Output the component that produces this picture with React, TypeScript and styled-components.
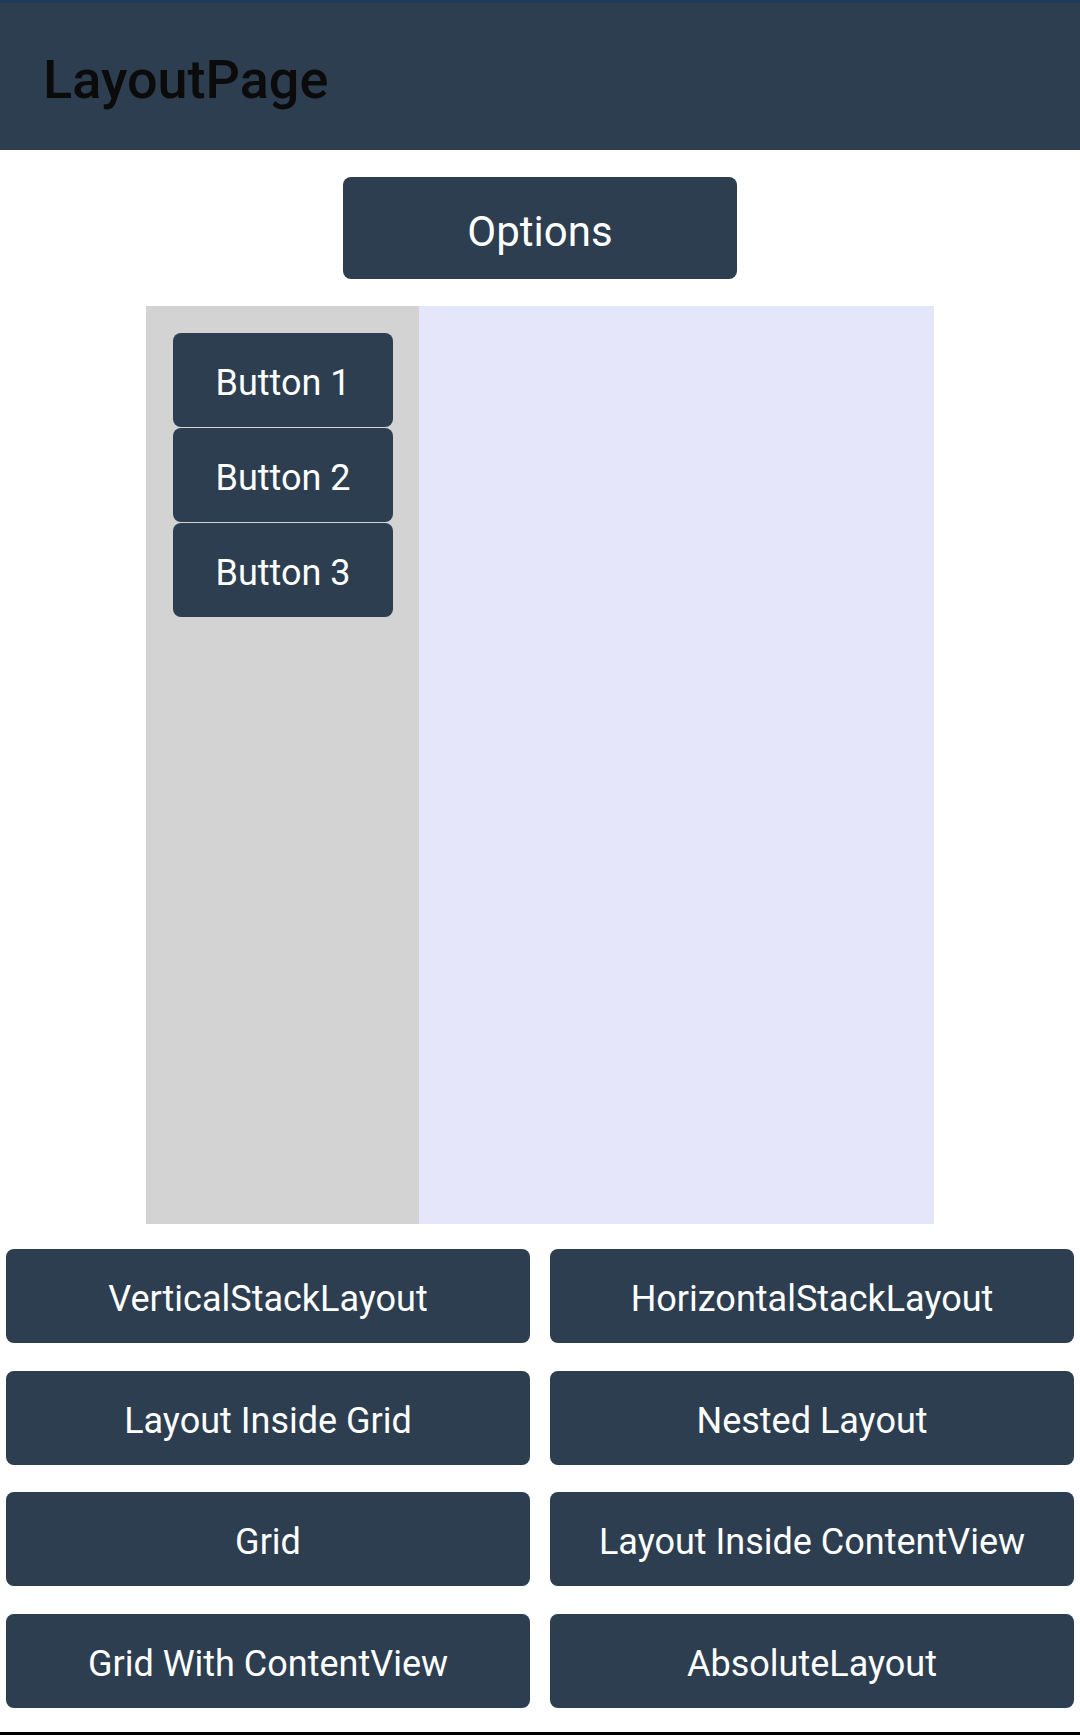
import React from "react";
import styled, { createGlobalStyle } from "styled-components";

const GlobalStyle = createGlobalStyle`
  html, body {
    margin: 0;
    padding: 0;
    background: #ffffff;
    font-family: Roboto, "Noto Sans", "Liberation Sans", sans-serif;
  }
  * { box-sizing: border-box; }
`;

const Page = styled.div`
  width: 1080px;
  min-height: 1735px;
  display: flex;
  flex-direction: column;
  background: #ffffff;
`;

const Header = styled.header`
  height: 150px;
  border-top: 3px solid #1e3a56;
  background: #2d3e50;
  display: flex;
  align-items: center;
  padding-left: 43px;
  padding-top: 7px;
`;

const Title = styled.h1`
  margin: 0;
  font-family: Roboto, "Noto Sans", sans-serif;
  font-weight: 500;
  font-size: 54px;
  line-height: 1;
  color: #0b0b0b;
`;

const Main = styled.main`
  display: flex;
  flex-direction: column;
  align-items: center;
  padding-top: 27px;
`;

const Button = styled.button<{ $w?: number; $h?: number; $size?: number }>`
  width: ${(p) => (p.$w ? `${p.$w}px` : "100%")};
  height: ${(p) => p.$h ?? 94}px;
  border: none;
  border-radius: 8px;
  background: #2c3e50;
  color: #ffffff;
  font-family: Roboto, "Noto Sans", sans-serif;
  font-size: ${(p) => p.$size ?? 36}px;
  font-weight: 400;
  padding: 6px 0 0 0;
  display: flex;
  align-items: center;
  justify-content: center;
  cursor: pointer;
`;

const Panel = styled.section`
  margin-top: 27px;
  width: 788px;
  height: 918px;
  display: grid;
  grid-template-columns: 273px 1fr;
`;

const SideColumn = styled.div`
  background: #d3d3d3;
  padding: 27px 26px 0 27px;
  display: flex;
  flex-direction: column;
  gap: 1px;
`;

const ContentArea = styled.div`
  background: #e6e6fa;
`;

const NavGrid = styled.nav`
  margin-top: 25px;
  width: 100%;
  padding: 0 6px;
  display: grid;
  grid-template-columns: 1fr 1fr;
  column-gap: 20px;
  row-gap: 27.5px;
`;

const BottomLine = styled.div`
  margin-top: auto;
  height: 3px;
  background: #000000;
`;

const navItems = [
  "VerticalStackLayout",
  "HorizontalStackLayout",
  "Layout Inside Grid",
  "Nested Layout",
  "Grid",
  "Layout Inside ContentView",
  "Grid With ContentView",
  "AbsoluteLayout",
];

export default function App() {
  return (
    <>
      <GlobalStyle />
      <Page>
        <Header>
          <Title>LayoutPage</Title>
        </Header>
        <Main>
          <Button $w={394} $h={102} $size={42}>
            Options
          </Button>
          <Panel>
            <SideColumn>
              <Button>Button 1</Button>
              <Button>Button 2</Button>
              <Button>Button 3</Button>
            </SideColumn>
            <ContentArea />
          </Panel>
          <NavGrid>
            {navItems.map((t) => (
              <Button key={t}>{t}</Button>
            ))}
          </NavGrid>
        </Main>
        <BottomLine />
      </Page>
    </>
  );
}
